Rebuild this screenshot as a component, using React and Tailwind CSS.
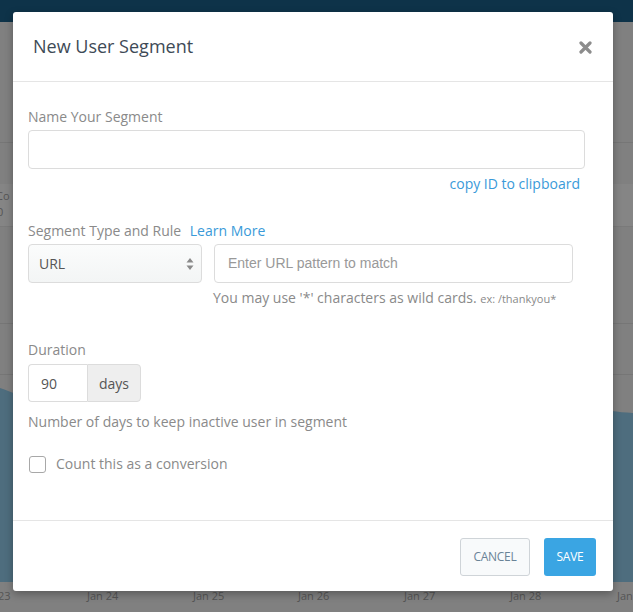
export default function App() {
  return (
    <div className="relative w-[633px] h-[612px] overflow-hidden bg-[#808080] font-['Open_Sans',sans-serif]">
      {/* Background (dimmed dashboard) */}
      <div className="flex flex-col h-full">
        <div className="h-[22px] bg-[#0e3349]" />
        <div className="h-[121px] border-b border-[#767676]" />
        <div className="h-[41px]" />
        <div className="h-[43px] bg-[#858585] border-b border-[#7a7a7a] text-[11px] text-[#555] leading-none">
          <div className="-ml-[4px] mt-[6px]">Co</div>
          <div className="-ml-[3px] mt-[5px]">0</div>
        </div>
        <div className="h-[97px] border-b border-[#767676]" />
        <div className="h-[51px] border-b border-[#767676]" />
        <div className="h-[207px] relative">
          <svg className="absolute inset-0" width="633" height="207" viewBox="0 0 633 207" preserveAspectRatio="none">
            <path d="M0 13 C 20 20, 40 30, 80 31 L 560 31 C 590 31, 600 36, 633 38 L 633 207 L 0 207 Z" fill="#4e6d7e" />
          </svg>
        </div>
        <div className="relative flex-1 text-[11px] text-[#555]">
          <span className="absolute left-[-2px] top-[6px]">23</span>
          <span className="absolute left-[87px] top-[6px]">Jan 24</span>
          <span className="absolute left-[193px] top-[6px]">Jan 25</span>
          <span className="absolute left-[298px] top-[6px]">Jan 26</span>
          <span className="absolute left-[404px] top-[6px]">Jan 27</span>
          <span className="absolute left-[510px] top-[6px]">Jan 28</span>
          <span className="absolute left-[617px] top-[6px]">Jan</span>
        </div>
      </div>

      {/* Modal */}
      <div className="absolute left-[13px] top-[12px] w-[600px] h-[579px] bg-white rounded-[3px] shadow-[0_3px_9px_rgba(0,0,0,0.3)] flex flex-col">
        <div className="h-[70px] border-b border-[#e5e5e5] flex items-center justify-between pl-[20px] pr-[21px]">
          <div className="text-[18px] text-[#3e4a56] leading-none -mt-[1px]">New User Segment</div>
          <svg width="13" height="13" viewBox="0 0 13 13" className="mt-[1px]">
            <path d="M2 2 L11 11 M11 2 L2 11" stroke="#8c8c8c" strokeWidth="3.2" strokeLinecap="round" />
          </svg>
        </div>

        <div className="flex-1 pl-[15px] pr-[28px] pt-[25px] text-[14px] text-[#8a8a8a]">
          <div className="leading-[20px]">Name Your Segment</div>
          <div className="mt-[3px] h-[39px] border border-[#dcdcdc] rounded-[4px]" />
          <div className="text-right text-[#3a9ad9] leading-[20px] mt-[5px] pr-[5px]">copy ID to clipboard</div>

          <div className="mt-[27px] leading-[20px]">
            Segment Type and Rule <span className="text-[#3a9ad9] ml-[5px]">Learn More</span>
          </div>
          <div className="mt-[3px] flex gap-[12px] pr-[12px]">
            <div className="w-[174px] h-[39px] border border-[#dcdcdc] rounded-[4px] bg-gradient-to-b from-[#fbfcfc] to-[#f3f5f5] flex items-center justify-between pl-[10px] pr-[7px] text-[#555]">
              <span>URL</span>
              <svg width="8" height="14" viewBox="0 0 8 14">
                <path d="M4 1 L7.5 5.5 L0.5 5.5 Z M4 13 L7.5 8.5 L0.5 8.5 Z" fill="#8a8a8a" />
              </svg>
            </div>
            <div className="flex-1 h-[39px] border border-[#dcdcdc] rounded-[4px] flex items-center pl-[13px] text-[#999] font-['Liberation_Sans',sans-serif]">
              Enter URL pattern to match
            </div>
          </div>
          <div className="ml-[185px] mt-[5px] leading-[20px]">
            You may use '*' characters as wild cards. <span className="text-[11px]">ex: /thankyou*</span>
          </div>

          <div className="mt-[31px] leading-[20px]">Duration</div>
          <div className="mt-[4px] flex w-[113px] h-[38px]">
            <div className="w-[59px] border border-[#dcdcdc] border-r-0 rounded-l-[4px] flex items-center pl-[12px] text-[#555]">90</div>
            <div className="flex-1 bg-[#eeeeee] border border-[#dcdcdc] rounded-r-[4px] flex items-center justify-center text-[#555]">days</div>
          </div>
          <div className="mt-[10px] leading-[20px]">Number of days to keep inactive user in segment</div>
          <div className="mt-[22px] flex items-center">
            <div className="w-[17px] h-[17px] border border-[#a8a8a8] rounded-[3px] ml-[1px]" />
            <span className="ml-[10px] leading-[20px]">Count this as a conversion</span>
          </div>
        </div>

        <div className="h-[71px] border-t border-[#e5e5e5] flex items-center justify-end gap-[14px] pr-[17px] pt-[2px]">
          <div className="w-[70px] h-[38px] border border-[#cfd4d8] rounded-[3px] bg-[#f8fafb] flex items-center justify-center text-[12px] text-[#6a8397] tracking-[-0.3px]">CANCEL</div>
          <div className="w-[52px] h-[38px] rounded-[3px] bg-[#3aa5e3] flex items-center justify-center text-[12px] text-white tracking-[-0.3px]">SAVE</div>
        </div>
      </div>
    </div>
  );
}
